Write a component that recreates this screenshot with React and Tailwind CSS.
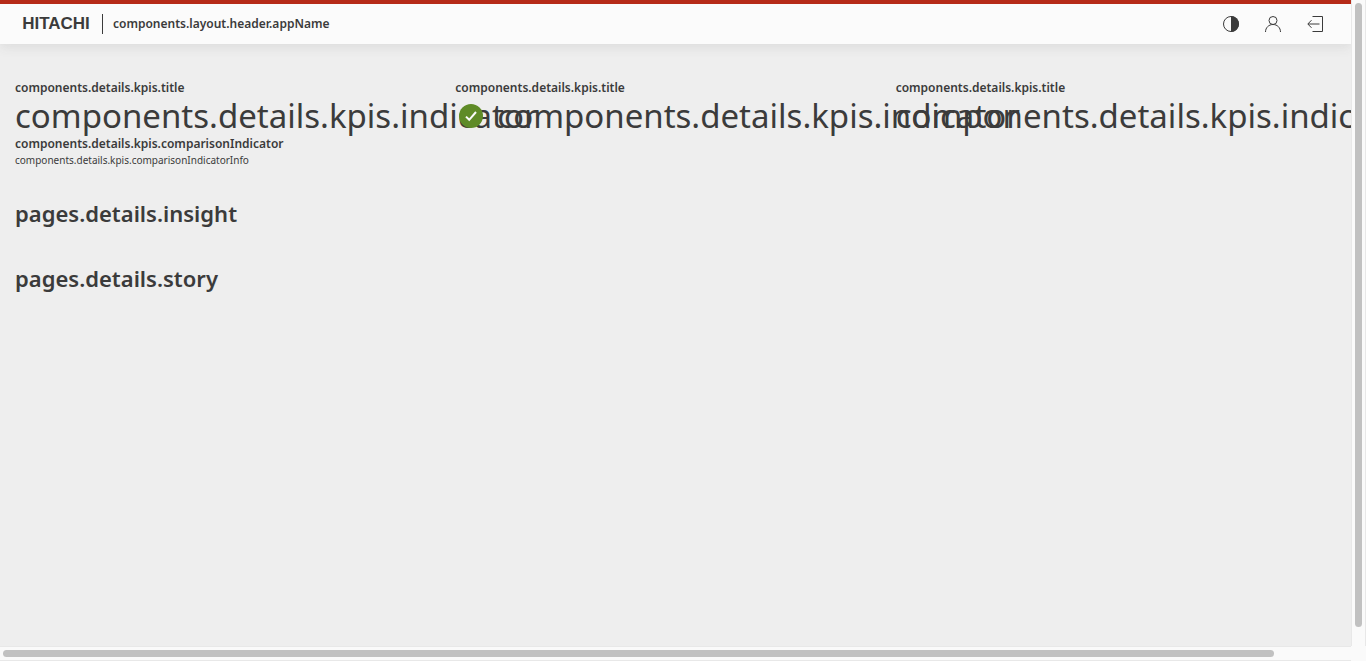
import React from "react";

const kpis = [
  {
    title: "components.details.kpis.title",
    indicator: "components.details.kpis.indicator",
    comparison: "components.details.kpis.comparisonIndicator",
    info: "components.details.kpis.comparisonIndicatorInfo",
  },
  {
    title: "components.details.kpis.title",
    indicator: "components.details.kpis.indicator",
    success: true,
  },
  {
    title: "components.details.kpis.title",
    indicator: "components.details.kpis.indicator",
  },
];

function IconButton({ label, children }) {
  return (
    <button type="button" aria-label={label} className="flex size-8 items-center justify-center">
      <svg width="16" height="16" viewBox="0 0 16 16" fill="none" stroke="currentColor" aria-hidden="true">
        {children}
      </svg>
    </button>
  );
}

function Header() {
  return (
    <header className="z-10 flex h-11 shrink-0 items-center border-t-4 border-[#b62b18] bg-[#fbfbfb] px-5 shadow-[0_2px_12px_rgba(65,65,65,0.12)]">
      <span className="w-[72px] text-center font-['Liberation_Sans',sans-serif] text-[17px] leading-5 font-bold">HITACHI</span>
      <span className="ml-[10px] h-5 w-px bg-current" />
      <span className="ml-[10px] text-xs font-semibold">components.layout.header.appName</span>
      <nav className="ml-auto flex gap-[10px]">
        <IconButton label="Toggle theme">
          <circle cx="8" cy="8" r="7.5" />
          <path d="M8 0a8 8 0 0 1 0 16z" fill="currentColor" stroke="none" />
        </IconButton>
        <IconButton label="User">
          <circle cx="8" cy="4.5" r="4" />
          <path d="M.5 16c0-4.3 3.2-7.5 7.5-7.5s7.5 3.2 7.5 7.5" />
        </IconButton>
        <IconButton label="Log out">
          <path d="M5.500 .5h10v15h-10M12.500 8H1M4.500 4.200 .8 8l3.700 3.800" />
        </IconButton>
      </nav>
    </header>
  );
}

function Kpi({ title, indicator, comparison, info, success }) {
  return (
    <section className="min-w-0 whitespace-nowrap">
      <h2 className="text-xs font-semibold">{title}</h2>
      <div className="flex h-10 items-center">
        {success && (
          <span className="mr-[10px] flex size-8 shrink-0 items-center justify-center">
            <svg width="24" height="24" viewBox="0 0 24 24" fill="none" aria-hidden="true">
              <circle cx="12" cy="12" r="12" fill="#5f8b27" />
              <path d="m7 12.600 3.200 3.200L17 8" stroke="#fbfbfb" strokeWidth="2" />
            </svg>
          </span>
        )}
        <p className="text-[33px] leading-10">{indicator}</p>
      </div>
      {comparison && <p className="text-xs font-semibold">{comparison}</p>}
      {info && <p className="text-[10px] leading-4">{info}</p>}
    </section>
  );
}

export default function App() {
  return (
    <div className="grid h-screen grid-cols-[minmax(0,1fr)_15px] grid-rows-[minmax(0,1fr)_15px] bg-[#fafafa] font-['Noto_Sans','Open_Sans',sans-serif] text-[#3b3b3b]">
      <div className="flex min-w-0 flex-col overflow-hidden bg-[#eeeeee]">
        <Header />
        <main className="px-[15px] pt-9">
          <div className="grid grid-cols-3">
            {kpis.map((kpi, i) => (
              <Kpi key={i} {...kpi} />
            ))}
          </div>
          <div className="flex flex-col gap-[37px] pt-[31px]">
            <h2 className="text-[22px] leading-7 font-semibold">pages.details.insight</h2>
            <h2 className="text-[22px] leading-7 font-semibold">pages.details.story</h2>
          </div>
        </main>
      </div>
      <div className="flex flex-col border-x border-[#e8e8e8] px-[3px] pt-[3px]" aria-hidden="true">
        <div className="h-[97%] w-full rounded-full bg-[#c1c1c1]" />
      </div>
      <div className="border-y border-[#e8e8e8] py-[3px] pl-[3px]" aria-hidden="true">
        <div className="h-full w-[94.3%] rounded-full bg-[#c1c1c1]" />
      </div>
    </div>
  );
}
